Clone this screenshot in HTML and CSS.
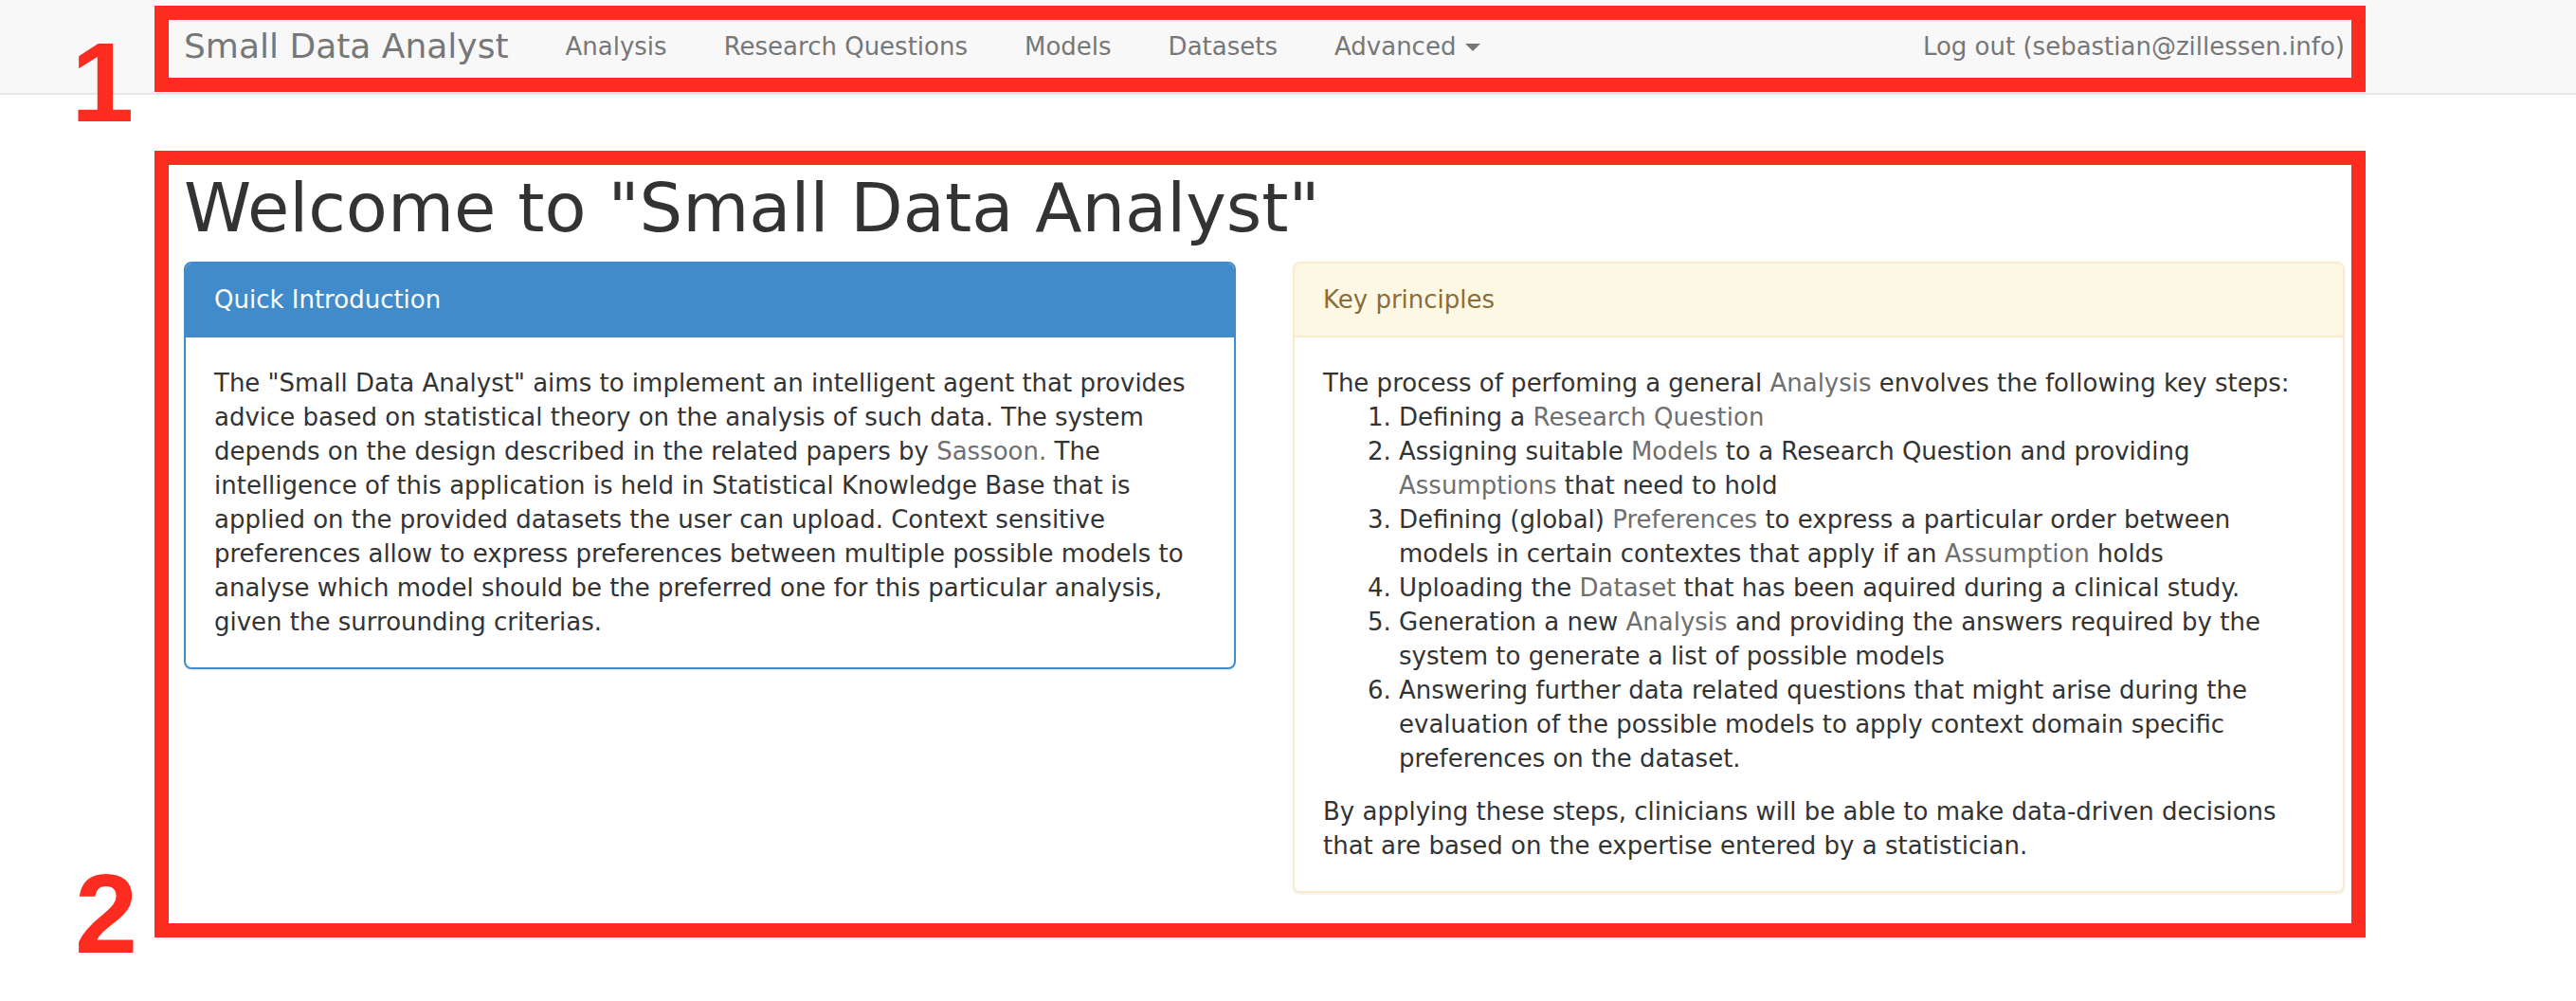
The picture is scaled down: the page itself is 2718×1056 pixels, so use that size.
FILE: index.html
```html
<!DOCTYPE html>
<html lang="en">
<head>
<meta charset="utf-8">
<title>Small Data Analyst</title>
<link rel="stylesheet" href="styles.css">
</head>
<body>
<nav class="navbar">
  <div class="container nav-inner">
    <a class="brand" href="#">Small Data Analyst</a>
    <a class="nav-link" href="#">Analysis</a>
    <a class="nav-link" href="#">Research Questions</a>
    <a class="nav-link" href="#">Models</a>
    <a class="nav-link" href="#">Datasets</a>
    <a class="nav-link" href="#">Advanced <span class="caret"></span></a>
    <a class="nav-link logout" href="#">Log out (sebastian@zillessen.info)</a>
  </div>
</nav>

<main class="container">
  <h1 class="title">Welcome to "Small Data Analyst"</h1>
  <div class="row">
    <section class="panel panel-primary">
      <div class="panel-heading">Quick Introduction</div>
      <div class="panel-body">
        <p class="text">The "Small Data Analyst" aims to implement an intelligent agent that provides advice based on statistical theory on the analysis of such data. The system depends on the design described in the related papers by <a class="link" href="#">Sassoon.</a> The intelligence of this application is held in Statistical Knowledge Base that is applied on the provided datasets the user can upload. Context sensitive preferences allow to express preferences between multiple possible models to analyse which model should be the preferred one for this particular analysis, given the surrounding criterias.</p>
      </div>
    </section>
    <section class="panel panel-warning">
      <div class="panel-heading">Key principles</div>
      <div class="panel-body">
        <p class="text">The process of perfoming a general <a class="link" href="#">Analysis</a> envolves the following key steps:</p>
        <ol class="steps">
          <li>Defining a <a class="link" href="#">Research Question</a></li>
          <li>Assigning suitable <a class="link" href="#">Models</a> to a Research Question and providing <a class="link" href="#">Assumptions</a> that need to hold</li>
          <li>Defining (global) <a class="link" href="#">Preferences</a> to express a particular order between models in certain contextes that apply if an <a class="link" href="#">Assumption</a> holds</li>
          <li>Uploading the <a class="link" href="#">Dataset</a> that has been aquired during a clinical study.</li>
          <li>Generation a new <a class="link" href="#">Analysis</a> and providing the answers required by the system to generate a list of possible models</li>
          <li>Answering further data related questions that might arise during the evaluation of the possible models to apply context domain specific preferences on the dataset.</li>
        </ol>
        <p class="text">By applying these steps, clinicians will be able to make data-driven decisions that are based on the expertise entered by a statistician.</p>
      </div>
    </section>
  </div>
</main>

<div class="mark mark-1"></div>
<div class="mark mark-2"></div>
<div class="mark-num num-1">1</div>
<div class="mark-num num-2">2</div>
</body>
</html>
```

FILE: styles.css
```css
* { box-sizing: border-box; }

html, body {
  margin: 0;
  padding: 0;
  background: #ffffff;
}

body {
  font-family: "DejaVu Sans", Verdana, sans-serif;
  font-size: 26px;
  line-height: 36px;
  color: #333333;
  position: relative;
  min-height: 1056px;
}

a { text-decoration: none; }

.container {
  width: 2340px;
  margin-left: 164px;
  padding: 0 30px;
}

/* Navbar */
.navbar {
  background: #f8f8f8;
  border-bottom: 2px solid #e7e7e7;
  height: 100px;
}

.nav-inner {
  display: flex;
  align-items: center;
  height: 98px;
}

.brand {
  font-size: 36px;
  color: #777777;
  padding-right: 30px;
}

.nav-link {
  font-size: 26px;
  color: #777777;
  padding: 0 30px;
  display: flex;
  align-items: center;
}

.caret {
  display: inline-block;
  width: 0;
  height: 0;
  margin-left: 10px;
  border-top: 8px solid #777777;
  border-left: 8px solid transparent;
  border-right: 8px solid transparent;
  margin-top: 2px;
}

.logout {
  margin-left: auto;
  padding-right: 0;
}

/* Main */
.title {
  font-size: 72px;
  line-height: 79px;
  font-weight: normal;
  color: #333333;
  margin: 80px 0 17px;
}

.row {
  display: grid;
  grid-template-columns: 1110px 1110px;
  column-gap: 60px;
  align-items: start;
}

.panel {
  border: 2px solid;
  border-radius: 8px;
  box-shadow: 0 2px 2px rgba(0, 0, 0, 0.05);
  background: #ffffff;
}

.panel-heading {
  padding: 20px 30px;
  line-height: 36px;
  border-bottom: 2px solid;
  border-radius: 6px 6px 0 0;
}

.panel-body {
  padding: 30px;
}

.panel-primary { border-color: #428bca; }
.panel-primary .panel-heading {
  background: #428bca;
  border-color: #428bca;
  color: #ffffff;
}

.panel-warning { border-color: #faebcc; }
.panel-warning .panel-heading {
  background: #fcf8e3;
  border-color: #faebcc;
  color: #8a6d3b;
}

.text { margin: 0; }

.link { color: #6f6f6f; }

.steps {
  margin: 0 0 20px;
  padding-left: 80px;
}

/* Annotation overlays */
.mark {
  position: absolute;
  border: 15px solid #fe2b20;
  left: 163px;
  width: 2333px;
}

.mark-1 { top: 6px; height: 91px; }
.mark-2 { top: 159px; height: 830px; }

.mark-num {
  position: absolute;
  font-family: "Liberation Sans", Arial, sans-serif;
  font-weight: bold;
  font-size: 119px;
  line-height: 119px;
  color: #fe2b20;
}

.num-1 { left: 75px; top: 27px; }
.num-2 { left: 79px; top: 904px; }
```
